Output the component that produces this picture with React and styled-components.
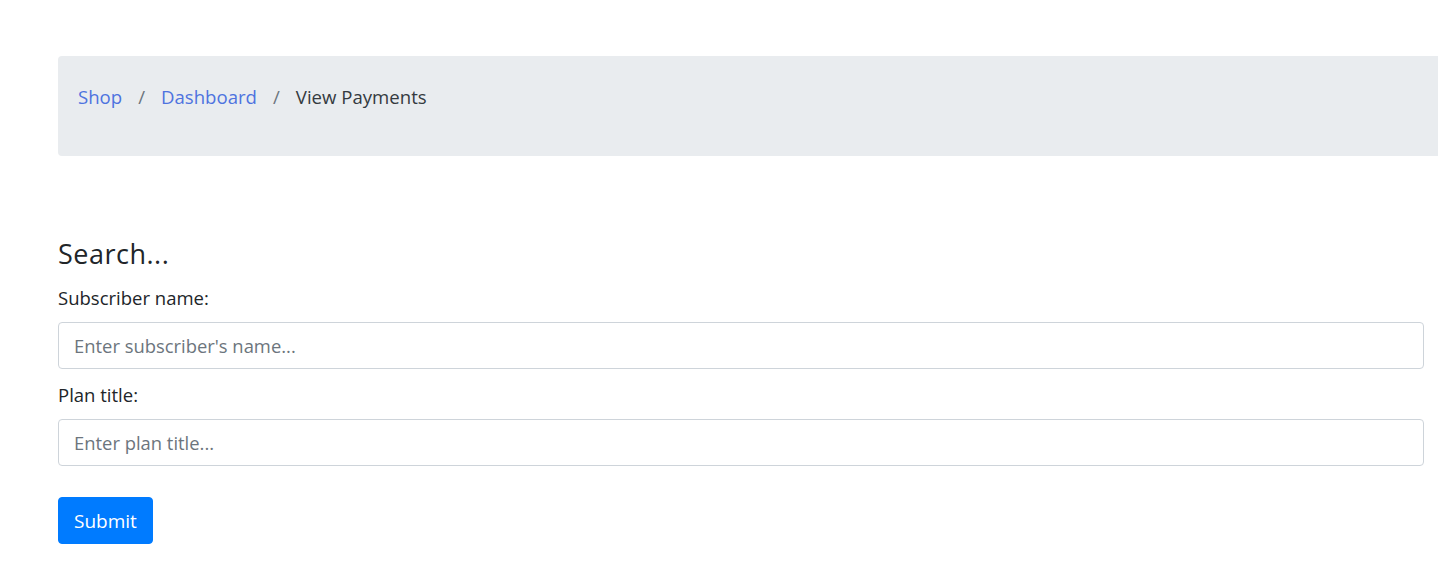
import styled, { createGlobalStyle } from "styled-components";

const GlobalStyle = createGlobalStyle`
  body {
    margin: 0;
    overflow-x: hidden;
    background: #fff;
    font-family: "Open Sans", "Noto Sans", sans-serif;
    color: #212529;
  }
`;

const Page = styled.div`
  padding: 56px 0 0 58px;
`;

const Breadcrumb = styled.nav`
  display: flex;
  align-items: flex-start;
  width: 1400px;
  height: 100px;
  box-sizing: border-box;
  padding: 27px 20px 0;
  background: #e9ecef;
  border-radius: 4px;
  font-size: 18.6px;
  line-height: 27px;
`;

const Crumb = styled.a`
  color: ${(p) => (p.$active ? "#343a40" : "#4e73df")};
  text-decoration: none;
`;

const Sep = styled.span`
  padding: 0 16px;
  color: #6c757d;
`;

const Form = styled.form`
  width: 1366px;
  margin-top: 80px;
`;

const Heading = styled.h3`
  margin: 0 0 13px;
  padding-top: 1px;
  font-size: 27px;
  font-weight: 400;
  letter-spacing: 0.5px;
  line-height: 34px;
`;

const Label = styled.label`
  display: block;
  font-size: 18.5px;
  line-height: 27px;
  margin-bottom: 11px;
`;

const Input = styled.input`
  display: block;
  width: 100%;
  height: 47px;
  box-sizing: border-box;
  padding: 9px 15px;
  font-family: inherit;
  font-size: 18.4px;
  color: #495057;
  border: 1px solid #ced4da;
  border-radius: 4px;
  margin-bottom: 12px;
  &::placeholder {
    color: #6c757d;
  }
`;

const Button = styled.button`
  margin-top: 19px;
  height: 47px;
  padding: 0 15px;
  font-family: inherit;
  font-size: 19px;
  color: #fff;
  background: #007bff;
  border: 1px solid #007bff;
  border-radius: 4px;
`;

export default function App() {
  return (
    <Page>
      <GlobalStyle />
      <Breadcrumb>
        <Crumb href="#">Shop</Crumb>
        <Sep>/</Sep>
        <Crumb href="#">Dashboard</Crumb>
        <Sep>/</Sep>
        <Crumb $active>View Payments</Crumb>
      </Breadcrumb>
      <Form onSubmit={(e) => e.preventDefault()}>
        <Heading>Search...</Heading>
        <Label>Subscriber name:</Label>
        <Input placeholder="Enter subscriber's name..." />
        <Label>Plan title:</Label>
        <Input placeholder="Enter plan title..." />
        <Button type="submit">Submit</Button>
      </Form>
    </Page>
  );
}
